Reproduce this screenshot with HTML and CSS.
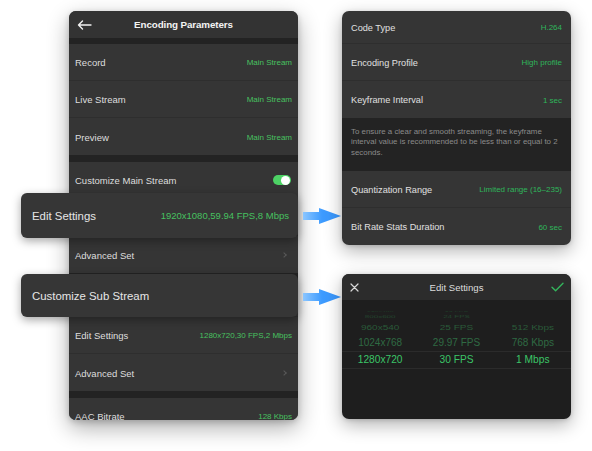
FILE: index.html
```html
<!DOCTYPE html>
<html>
<head>
<meta charset="utf-8">
<link rel="stylesheet" href="styles.css">
</head>
<body>
<div class="canvas">

  <div class="phone">
    <div class="hdr">
      <svg class="back" width="15" height="10" viewBox="0 0 15 10"><path d="M14 5H1.5M5.5 1L1.5 5l4 4" fill="none" stroke="#f2f2f2" stroke-width="1.4" stroke-linecap="round" stroke-linejoin="round"/></svg>
      <span class="title">Encoding Parameters</span>
    </div>
    <div class="band"></div>
    <div class="row"><span class="lbl">Record</span><span class="val">Main Stream</span></div>
    <div class="row"><span class="lbl">Live Stream</span><span class="val">Main Stream</span></div>
    <div class="row last"><span class="lbl">Preview</span><span class="val">Main Stream</span></div>
    <div class="band b7"></div>
    <div class="row"><span class="lbl">Customize Main Stream</span><span class="toggle"><span class="knob"></span></span></div>
    <div class="row"></div>
    <div class="row last"><span class="lbl">Advanced Set</span><span class="chev"></span></div>
    <div class="band b7"></div>
    <div class="row"></div>
    <div class="row"><span class="lbl">Edit Settings</span><span class="val">1280x720,30 FPS,2 Mbps</span></div>
    <div class="row last"><span class="lbl">Advanced Set</span><span class="chev"></span></div>
    <div class="band b7"></div>
    <div class="row"><span class="lbl">AAC Bitrate</span><span class="val">128 Kbps</span></div>
  </div>

  <div class="card card-main"><span class="clbl">Edit Settings</span><span class="cval">1920x1080,59.94 FPS,8 Mbps</span></div>
  <div class="card card-sub"><span class="clbl">Customize Sub Stream</span></div>

  <svg class="arrow arrow-1" width="38" height="16" viewBox="0 0 38 16">
    <defs><linearGradient id="ag1" x1="0" x2="1" y1="0" y2="0"><stop offset="0" stop-color="#8cc6ff"/><stop offset="0.5" stop-color="#3d9bff"/><stop offset="1" stop-color="#3a98ff"/></linearGradient></defs>
    <path d="M0 4H16V0L38 8 16 16V12H0Z" fill="url(#ag1)"/>
  </svg>
  <svg class="arrow arrow-2" width="38" height="16" viewBox="0 0 38 16">
    <defs><linearGradient id="ag2" x1="0" x2="1" y1="0" y2="0"><stop offset="0" stop-color="#8cc6ff"/><stop offset="0.5" stop-color="#3d9bff"/><stop offset="1" stop-color="#3a98ff"/></linearGradient></defs>
    <path d="M0 4H16V0L38 8 16 16V12H0Z" fill="url(#ag2)"/>
  </svg>

  <div class="panel panel-top">
    <div class="prow first"><span class="plbl">Code Type</span><span class="pval">H.264</span></div>
    <div class="prow"><span class="plbl">Encoding Profile</span><span class="pval">High profile</span></div>
    <div class="prow nob"><span class="plbl">Keyframe Interval</span><span class="pval">1 sec</span></div>
    <div class="note">To ensure a clear and smooth streaming, the keyframe interval value is recommended to be less than or equal to 2 seconds.</div>
    <div class="prow"><span class="plbl">Quantization Range</span><span class="pval">Limited range (16–235)</span></div>
    <div class="prow nob"><span class="plbl">Bit Rate Stats Duration</span><span class="pval">60 sec</span></div>
  </div>

  <div class="panel panel-edit">
    <div class="ehdr">
      <svg class="close" width="9" height="9" viewBox="0 0 9 9"><path d="M1 1L8 8M8 1L1 8" stroke="#d8d8d8" stroke-width="1.2" stroke-linecap="round"/></svg>
      <span class="etitle">Edit Settings</span>
      <svg class="check" width="13" height="10" viewBox="0 0 13 10"><path d="M1 5.2L4.6 8.8 12 1.2" fill="none" stroke="#34b45c" stroke-width="1.4" stroke-linecap="round" stroke-linejoin="round"/></svg>
    </div>
    <div class="picker">
      <div class="prk r0"><span>720x480</span><span>23 FPS</span><span></span></div>
      <div class="prk r1"><span>800x600</span><span>24 FPS</span><span></span></div>
      <div class="prk r2"><span>960x540</span><span>25 FPS</span><span>512 Kbps</span></div>
      <div class="prk r3"><span>1024x768</span><span>29.97 FPS</span><span>768 Kbps</span></div>
      <div class="prk r4"><span>1280x720</span><span>30 FPS</span><span>1 Mbps</span></div>
    </div>
  </div>

</div>
</body>
</html>
```

FILE: styles.css
```css
* { box-sizing: border-box; }
html, body { margin: 0; padding: 0; background: #ffffff; }
body { font-family: "Liberation Sans", Arial, sans-serif; }

.canvas { position: relative; width: 592px; height: 451px; overflow: hidden; background: #fff; }

/* left phone */
.phone {
  position: absolute; left: 69px; top: 11px; width: 229px; height: 409px;
  background: #353535; border-radius: 7px; overflow: hidden;
  display: flex; flex-direction: column;
  box-shadow: 0 8px 22px rgba(0,0,0,0.32), 0 2px 6px rgba(0,0,0,0.18);
}
.hdr {
  height: 27px; flex: none; background: #333333; position: relative;
  display: flex; align-items: center; justify-content: center;
}
.back { position: absolute; left: 8px; top: 9px; }
.title { color: #f4f4f4; font-size: 9.8px; font-weight: bold; letter-spacing: -0.1px; }
.band { height: 6px; flex: none; background: #232323; }
.band.b7 { height: 7px; }
.row {
  height: 37px; flex: none; display: flex; align-items: center; justify-content: space-between;
  padding: 0 6px; border-bottom: 1px solid #2e2e2e; background: #353535;
}
.row.last { border-bottom: none; }
.lbl { color: #dedede; font-size: 9.5px; padding-top: 1px; }
.val { color: #48c160; font-size: 8px; padding-top: 1px; }
.toggle {
  width: 18px; height: 10px; border-radius: 5px; background: #4dd265; position: relative; margin-right: 1px;
}
.knob { position: absolute; right: 1px; top: 0.5px; width: 9px; height: 9px; border-radius: 50%; background: #fff; }
.chev {
  width: 4px; height: 4px; border-top: 1px solid #595959; border-right: 1px solid #595959;
  transform: rotate(45deg); margin-right: 6px;
}

/* overlay cards */
.card {
  position: absolute; left: 21px; width: 277px; background: #363636; border-radius: 6px;
  display: flex; align-items: center; justify-content: space-between; padding: 0 9px 0 11px;
  box-shadow: 0 3px 10px rgba(0,0,0,0.35);
}
.card-main { top: 193px; height: 45px; }
.card-sub { top: 274px; height: 43px; }
.clbl { color: #e6e6e6; font-size: 11.4px; }
.cval { color: #46c160; font-size: 9.5px; }

/* arrows */
.arrow { position: absolute; left: 303px; }
.arrow-1 { top: 208px; }
.arrow-2 { top: 289px; }

/* right panels */
.panel {
  position: absolute; left: 342px; width: 229px; border-radius: 7px; overflow: hidden;
  background: #353535; display: flex; flex-direction: column;
  box-shadow: 0 6px 18px rgba(0,0,0,0.30), 0 1px 4px rgba(0,0,0,0.15);
}
.panel-top { top: 11px; height: 234px; }
.prow {
  height: 37px; flex: none; display: flex; align-items: center; justify-content: space-between;
  padding: 0 9px; border-bottom: 1px solid #2e2e2e;
}
.prow.first { height: 33px; }
.prow.nob { border-bottom: none; }
.plbl { color: #e0e0e0; font-size: 9.2px; padding-top: 1px; }
.pval { color: #2fb55b; font-size: 8px; padding-top: 1px; }
.note {
  height: 53px; flex: none; background: #232323; color: #8b8b8b;
  font-size: 7.9px; line-height: 10.4px; padding: 9px 9px 0 9px;
}

.panel-edit { top: 274px; height: 145px; background: #1e1e1e; }
.ehdr {
  height: 26px; flex: none; background: #2c2c2c; position: relative;
  display: flex; align-items: center; justify-content: center;
}
.close { position: absolute; left: 8px; top: 9px; }
.check { position: absolute; right: 7px; top: 8px; }
.etitle { color: #dcdcdc; font-size: 9.6px; }

.picker { display: flex; flex-direction: column; padding-top: 9px; }
.prk {
  display: grid; grid-template-columns: 1fr 1fr 1fr; text-align: center; flex: none;
  font-size: 10px; align-items: center; overflow: hidden;
}
.prk span { display: block; }
.r0 { height: 4px; color: #1f3a27; }
.r0 span { transform: scaleY(0.25); font-size: 7px; line-height: 4px; }
.r1 { height: 8px; color: #24462f; }
.r1 span { transform: scaleY(0.5); font-size: 8px; line-height: 8px; }
.r2 { height: 14px; color: #2a5a39; }
.r2 span { transform: scaleY(0.8); line-height: 14px; }
.r3 { height: 17px; color: #2f6a43; border-bottom: 1px solid #2b2b2b; }
.r3 span { line-height: 16px; }
.r4 { height: 17px; color: #3bc567; border-bottom: 1px solid #2b2b2b; font-size: 10.2px; }
.r4 span { line-height: 16px; }
```
